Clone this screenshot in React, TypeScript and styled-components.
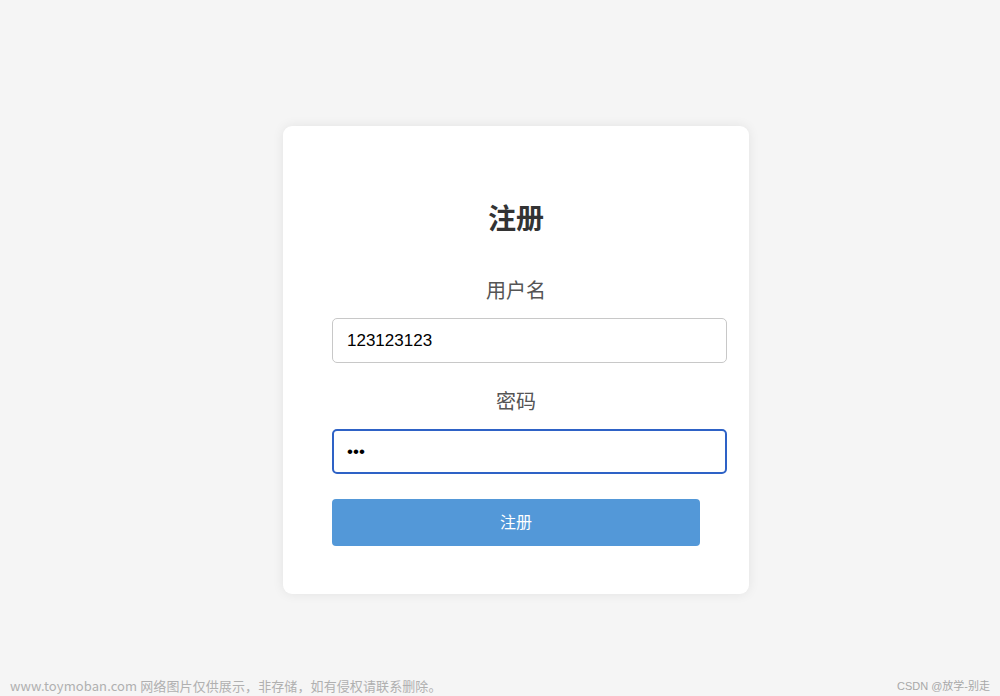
import React from 'react';
import styled, { createGlobalStyle } from 'styled-components';

const GlobalStyle = createGlobalStyle`
  html, body {
    margin: 0;
    padding: 0;
    background: #f5f5f5;
    font-family: "Liberation Sans", "Noto Sans CJK SC", sans-serif;
  }
  * { box-sizing: border-box; }
`;

const Page = styled.div`
  position: relative;
  width: 1000px;
  height: 696px;
  background: #f5f5f5;
  overflow: hidden;
  padding-top: 126px;
  padding-left: 283px;
`;

const Card = styled.form`
  width: 466px;
  height: 468px;
  background: #fff;
  border-radius: 9px;
  box-shadow: 0 0 12px rgba(0, 0, 0, 0.08);
  padding: 76px 22px 0 49px;
  display: flex;
  flex-direction: column;
`;

const Title = styled.h2`
  margin: 0;
  text-align: center;
  font-size: 28px;
  line-height: 36px;
  font-weight: 700;
  color: #333;
  padding-right: 27px;
`;

const Label = styled.label<{ $top: number }>`
  display: block;
  margin-top: ${(p) => p.$top}px;
  text-align: center;
  font-size: 20px;
  line-height: 28px;
  color: #555;
  padding-right: 27px;
`;

const Input = styled.input<{ $focused?: boolean }>`
  margin-top: 13px;
  width: 395px;
  height: 45px;
  padding: 0 ${(p) => (p.$focused ? 13 : 14)}px;
  border: ${(p) => (p.$focused ? '2px solid #2e62c6' : '1px solid #c8c8c8')};
  border-radius: 5px;
  font-family: "Liberation Sans", "Noto Sans CJK SC", sans-serif;
  font-size: 17px;
  color: #000;
  outline: none;
  background: #fff;
`;

const Submit = styled.button`
  margin-top: 25px;
  width: 368px;
  height: 47px;
  padding: 0 0 3px;
  border: none;
  border-radius: 4px;
  background: #5398d8;
  color: #fff;
  font-family: "Noto Sans CJK SC", sans-serif;
  font-size: 16px;
  cursor: pointer;
`;

const Watermark = styled.div`
  position: absolute;
  left: 10px;
  bottom: 1px;
  font-family: "Noto Sans CJK SC", sans-serif;
  font-size: 13px;
  letter-spacing: 0.1px;
  color: #b0b0b0;
`;

const Credit = styled.div`
  position: absolute;
  right: 10px;
  bottom: 3px;
  font-family: "Liberation Sans", "Noto Sans CJK SC", sans-serif;
  font-size: 11px;
  color: #a8a8a8;
`;

const App: React.FC = () => {
  return (
    <>
      <GlobalStyle />
      <Page>
        <Card onSubmit={(e) => e.preventDefault()}>
          <Title>注册</Title>
          <Label $top={39}>用户名</Label>
          <Input type='text' defaultValue='123123123' />
          <Label $top={25}>密码</Label>
          <Input type='password' defaultValue='123' $focused />
          <Submit type='submit'>注册</Submit>
        </Card>
        <Watermark>www.toymoban.com 网络图片仅供展示，非存储，如有侵权请联系删除。</Watermark>
        <Credit>CSDN @放学-别走</Credit>
      </Page>
    </>
  );
};

export default App;
